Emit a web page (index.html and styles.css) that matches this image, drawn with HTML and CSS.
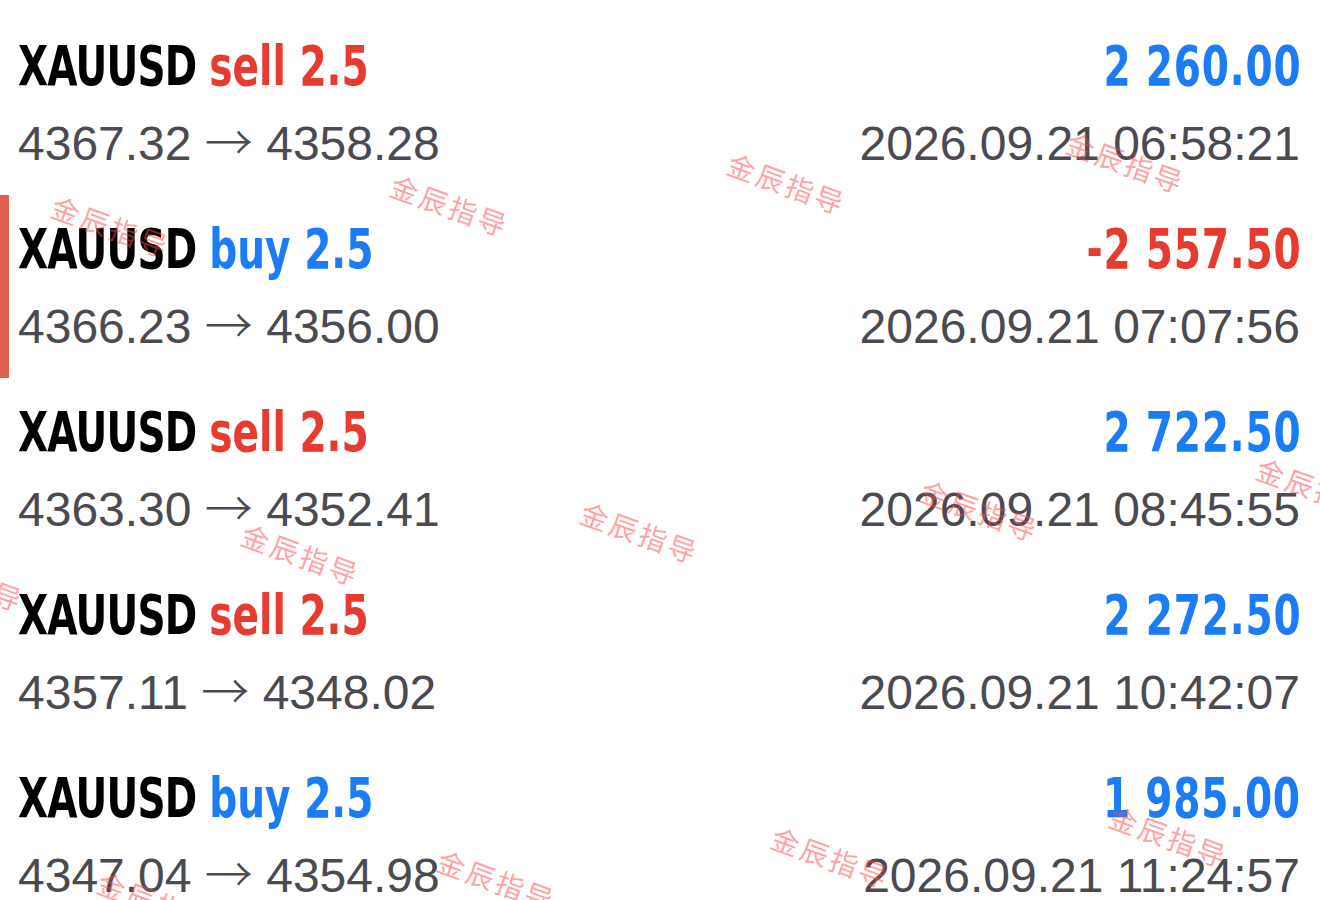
FILE: index.html
```html
<!DOCTYPE html>
<html lang="zh-CN">
<head>
  <meta charset="UTF-8" />
  <meta name="viewport" content="width=device-width, initial-scale=1.0"/>
  <title>交易历史</title>
  <link rel="stylesheet" href="styles.css">
</head>
<body>
  <div class="history">
    <div class="trade">
      <div class="title">XAUUSD <span class="sell">sell 2.5</span></div>
      <div class="profit plus">2 260.00</div>
      <div class="prices">4367.32 <span class="arrow">→</span> 4358.28</div>
      <div class="time">2026.09.21 06:58:21</div>
    </div>

    <div class="trade selected">
      <div class="title">XAUUSD <span class="buy">buy 2.5</span></div>
      <div class="profit minus">-2 557.50</div>
      <div class="prices">4366.23 <span class="arrow">→</span> 4356.00</div>
      <div class="time">2026.09.21 07:07:56</div>
    </div>

    <div class="trade">
      <div class="title">XAUUSD <span class="sell">sell 2.5</span></div>
      <div class="profit plus">2 722.50</div>
      <div class="prices">4363.30 <span class="arrow">→</span> 4352.41</div>
      <div class="time">2026.09.21 08:45:55</div>
    </div>

    <div class="trade">
      <div class="title">XAUUSD <span class="sell">sell 2.5</span></div>
      <div class="profit plus">2 272.50</div>
      <div class="prices">4357.11 <span class="arrow">→</span> 4348.02</div>
      <div class="time">2026.09.21 10:42:07</div>
    </div>

    <div class="trade">
      <div class="title">XAUUSD <span class="buy">buy 2.5</span></div>
      <div class="profit plus">1 985.00</div>
      <div class="prices">4347.04 <span class="arrow">→</span> 4354.98</div>
      <div class="time">2026.09.21 11:24:57</div>
    </div>

    <!-- watermark layer -->
    <div class="mark" style="left:787px;top:183px">金辰指导</div>
    <div class="mark" style="left:1126px;top:162px">金辰指导</div>
    <div class="mark" style="left:450px;top:205px">金辰指导</div>
    <div class="mark" style="left:111px;top:226px">金辰指导</div>
    <div class="mark" style="left:640px;top:532px">金辰指导</div>
    <div class="mark" style="left:980px;top:510px">金辰指导</div>
    <div class="mark" style="left:301px;top:554px">金辰指导</div>
    <div class="mark" style="left:1316px;top:488px">金辰指导</div>
    <div class="mark" style="left:-35px;top:580px">金辰指导</div>
    <div class="mark" style="left:831px;top:857px">金辰指导</div>
    <div class="mark" style="left:1169px;top:836px">金辰指导</div>
    <div class="mark" style="left:497px;top:880px">金辰指导</div>
    <div class="mark" style="left:157px;top:902px">金辰指导</div>
  </div>
</body>
</html>
```

FILE: styles.css
```css
body {
  margin: 0;
  background: #fff;
  font-family: "Liberation Sans", "Helvetica Neue", Arial, sans-serif;
  color: #4a4a50;
  overflow: hidden;
}

.history {
  position: relative;
  padding-top: 12px;
  height: 888px;
  overflow: hidden;
}

.trade {
  display: grid;
  grid-template-columns: 1fr auto;
  align-content: start;
  row-gap: 20px;
  height: 183px;
  box-sizing: border-box;
  padding: 18px 20px 0 18px;
}

.trade.selected {
  box-shadow: inset 9px 0 0 #e0604f;
}

/* no narrow face installed, so squeeze DejaVu Condensed a bit more */
.title,
.profit {
  font-family: "DejaVu Sans Condensed", "DejaVu Sans", sans-serif;
  font-weight: bold;
  font-size: 55px;
  line-height: 72px;
  white-space: nowrap;
  transform: scaleX(0.79);
}

.title {
  color: #000;
  letter-spacing: -1px;
  transform-origin: left center;
}

.title span {
  letter-spacing: 0;
}

.profit {
  text-align: right;
  letter-spacing: 1px;
  margin-right: -1px;
  transform-origin: right center;
}

.sell,
.minus {
  color: #e63b2e;
}

.buy,
.plus {
  color: #1b7cf5;
}

.prices,
.time {
  font-size: 48px;
  line-height: 44px;
  white-space: nowrap;
}

.arrow {
  font-family: "Noto Sans CJK SC", sans-serif;
  font-weight: 300;
  line-height: 0;
}

.time {
  text-align: right;
}

.mark {
  position: absolute;
  transform: translate(-50%, -50%) rotate(20deg);
  font-family: "Noto Sans CJK SC", sans-serif;
  font-size: 28px;
  letter-spacing: 3px;
  line-height: 1;
  color: rgba(255, 70, 70, 0.5);
  white-space: nowrap;
  pointer-events: none;
}
```
